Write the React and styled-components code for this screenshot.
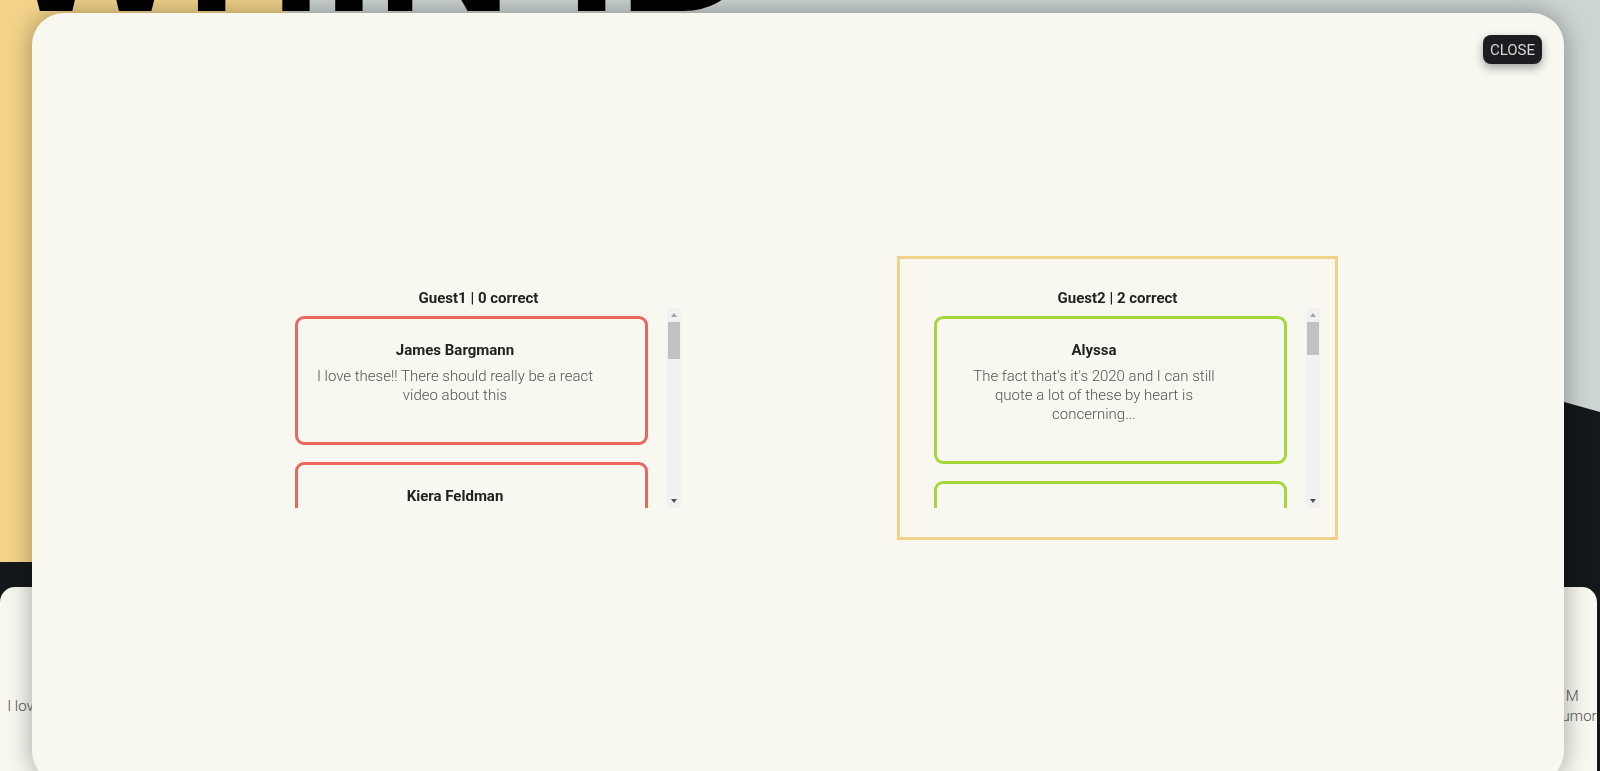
import React from "react";
import styled, { createGlobalStyle } from "styled-components";

const players = [
  {
    name: "Guest1",
    correct: 0,
    active: false,
    color: "#e8675f",
    thumb: 37,
    comments: [
      { author: "James Bargmann", text: "I love these!! There should really be a react video about this" },
      { author: "Kiera Feldman", text: "This brings back so many memories from middle school" },
      { author: "Marcus Lee", text: "The second one gets me every single time" },
      { author: "Priya Shah", text: "I watched this way too many times last night" },
      { author: "Tom Becker", text: "Who else is here in 2020?" },
      { author: "Nina Alvarez", text: "Classic. Absolutely classic." },
    ],
  },
  {
    name: "Guest2",
    correct: 2,
    active: true,
    color: "#a6d63a",
    thumb: 33,
    comments: [
      { author: "Alyssa", text: "The fact that's it's 2020 and I can still quote a lot of these by heart is concerning..." },
      { author: "Daniel Roy", text: "I can't stop laughing at the ending" },
      { author: "Sophie Turner", text: "My whole family still says these lines" },
      { author: "Kevin Park", text: "This is pure internet history right here" },
      { author: "Mia Wong", text: "I showed this to my little brother and he loved it" },
      { author: "Chris Hall", text: "Never gets old" },
      { author: "Ella Brooks", text: "Okay but why is this still so funny" },
    ],
  },
];

const backgroundCards = [
  "I love these!! There should really be a react video about it",
  "This brings back so many memories from middle school",
  "Who else is here in 2020?",
  "Best channel on YouTube, hands down. Hello from M\nand thanks for always having such a great sense of humor",
];

export default function App() {
  return (
    <>
      <GlobalStyle />
      <Page>
        <Hero>
          <BigTitle>WHIN ID</BigTitle>
          <YellowSide />
          <GraySide />
        </Hero>
        <CardsRow>
          {backgroundCards.map((text, i) => (
            <BgCard key={i}>{text}</BgCard>
          ))}
        </CardsRow>
      </Page>

      <Modal>
        <CloseButton>CLOSE</CloseButton>
        {players.map((player) => (
          <Panel key={player.name} $active={player.active}>
            <PanelTitle>
              {player.name} | {player.correct} correct
            </PanelTitle>
            <ScrollArea>
              <List>
                {player.comments.map((c) => (
                  <Card key={c.author} $color={player.color}>
                    <CardBody>
                      <Author>{c.author}</Author>
                      <Comment>{c.text}</Comment>
                    </CardBody>
                  </Card>
                ))}
              </List>
              <Track>
                <Arrow $dir="up" />
                <Thumb $size={player.thumb} />
                <Arrow $dir="down" />
              </Track>
            </ScrollArea>
          </Panel>
        ))}
      </Modal>
    </>
  );
}

const GlobalStyle = createGlobalStyle`
  html, body {
    margin: 0;
    height: 100%;
    overflow: hidden;
  }

  body {
    font-family: Roboto, "Noto Sans", sans-serif;
    background: #15181b;
  }
`;

// background page behind the modal
const Page = styled.div`
  display: flex;
  flex-direction: column;
  height: 100vh;
  overflow: hidden;
`;

const Hero = styled.header`
  position: relative;
  display: flex;
  flex-shrink: 0;
  height: 562px;
  overflow: hidden;
`;

const BigTitle = styled.h1`
  position: absolute;
  top: -150px;
  left: 6px;
  margin: 0;
  z-index: 1;
  font: 900 190px/1 "Liberation Sans", sans-serif;
  color: #000;
  white-space: nowrap;
`;

const YellowSide = styled.div`
  width: 287px;
  background: #f4d48b;
`;

const GraySide = styled.div`
  position: relative;
  flex: 1;
  background: #cdd4d4;

  &::after {
    content: "";
    position: absolute;
    inset: 0;
    background: #15181b;
    clip-path: polygon(0 47px, 100% 412px, 100% 100%, 0 100%);
  }
`;

const CardsRow = styled.div`
  display: flex;
  gap: 22px;
  padding: 25px 3px 0 0;
`;

const BgCard = styled.div`
  flex: 1;
  height: 184px;
  box-sizing: border-box;
  padding-top: 54px;
  display: flex;
  align-items: center;
  justify-content: center;
  background: #f8f7f0;
  border-radius: 15px 15px 0 0;
  font: 300 15px/20px Roboto, sans-serif;
  color: #555;
  text-align: center;
  white-space: pre-line;
`;

// modal
const Modal = styled.div`
  position: fixed;
  top: 13px;
  left: 32px;
  width: 1532px;
  height: 770px;
  z-index: 10;
  display: flex;
  align-items: center;
  justify-content: center;
  gap: 198px;
  background: #f8f7f0;
  border-radius: 32px;
  box-shadow: 0 0 26px rgba(0, 0, 0, 0.35);
`;

const CloseButton = styled.button`
  position: absolute;
  top: 22px;
  right: 22px;
  width: 59px;
  height: 29px;
  padding: 0;
  border: none;
  border-radius: 8px;
  background: #1b1d21;
  color: #d4d4d4;
  font: 400 15px Roboto, sans-serif;
  box-shadow: 0 4px 10px rgba(0, 0, 0, 0.35);
  cursor: pointer;
`;

const Panel = styled.section`
  width: 441px;
  box-sizing: border-box;
  padding: 29px 0;
  border: 3px solid ${(p) => (p.$active ? "#f0d28a" : "transparent")};
`;

const PanelTitle = styled.h3`
  margin: 0;
  text-align: center;
  font: 700 15px/20px Roboto, sans-serif;
  color: #222;
`;

const ScrollArea = styled.div`
  display: flex;
  width: 386px;
  height: 200px;
  margin-left: 34px;
`;

const List = styled.div`
  flex: 1;
  box-sizing: border-box;
  padding-top: 8px;
  display: flex;
  flex-direction: column;
  gap: 17px;
  overflow: hidden;
`;

const Track = styled.div`
  width: 14px;
  display: flex;
  flex-direction: column;
  background: #f1f1f1;
`;

const Arrow = styled.div`
  height: 14px;
  display: flex;
  align-items: center;
  justify-content: center;
  margin-top: ${(p) => (p.$dir === "down" ? "auto" : "0")};

  &::before {
    content: "";
    border-left: 3.5px solid transparent;
    border-right: 3.5px solid transparent;
    ${(p) =>
      p.$dir === "up"
        ? "border-bottom: 4px solid #a3a3a3;"
        : "border-top: 4px solid #505050;"}
  }
`;

const Thumb = styled.div`
  height: ${(p) => p.$size}px;
  margin: 0 1px;
  background: #c1c1c1;
`;

const Card = styled.div`
  flex-shrink: 0;
  width: 353px;
  box-sizing: border-box;
  padding: 21px 0 37px;
  border: 3px solid ${(p) => p.$color};
  border-radius: 9px;
`;

const CardBody = styled.div`
  width: 280px;
  margin-left: 17px;
  text-align: center;
`;

const Author = styled.h4`
  margin: 0 0 7px;
  font: 700 15px/20px Roboto, sans-serif;
  color: #222;
`;

const Comment = styled.p`
  margin: 0;
  font: 300 15px/19px Roboto, sans-serif;
  color: #555;
`;
